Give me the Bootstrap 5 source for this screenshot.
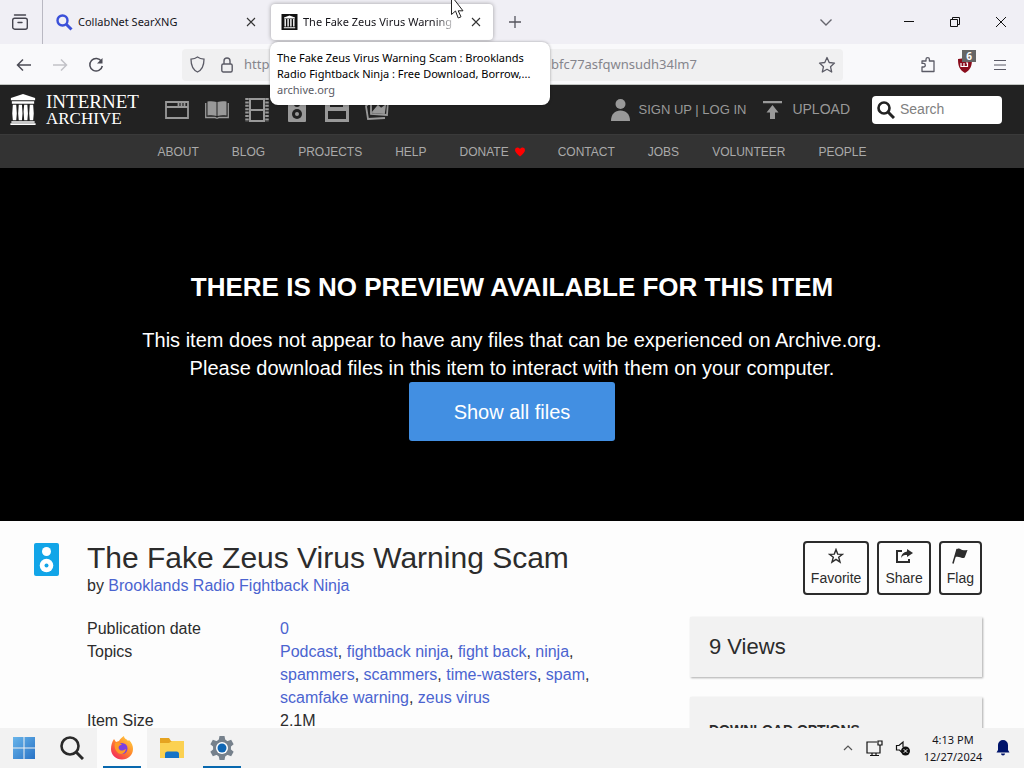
<!DOCTYPE html>
<html lang="en">
<head>
<meta charset="utf-8">
<meta name="viewport" content="width=device-width, initial-scale=1">
<title>The Fake Zeus Virus Warning Scam</title>
<link href="https://cdn.jsdelivr.net/npm/bootstrap@5.3.0/dist/css/bootstrap.min.css" rel="stylesheet">
<style>
  body { font-family: "Liberation Sans", Arial, sans-serif; color: #2c2c2c; background: #fdfdfd; }
  svg { display: block; flex: none; }
  button { background: none; border: 0; padding: 0; color: inherit; }
  a { text-decoration: none; color: #4b64d0; }

  /* browser chrome */
  .chrome { font-family: "Noto Sans", "Open Sans", sans-serif; font-size: 12px; color: #15141a; }
  .tabstrip { height: 44px; background: #f0eff5; }
  .tab-history { width: 43px; height: 44px; border-right: 1px solid #b9b8c2; color: #45454f; padding-right: 3px; }
  .browser-tab { width: 222px; height: 36px; padding: 0 12px 0 10px; margin-left: 3px; gap: 5px; border-radius: 4px; }
  .browser-tab.current { background: #fff; box-shadow: 0 0 4px rgba(0,0,0,.35); }
  .tab-text { font-size: 11px; white-space: nowrap; overflow: hidden; }
  .current .tab-text { -webkit-mask-image: linear-gradient(90deg, #000 85%, transparent); mask-image: linear-gradient(90deg, #000 85%, transparent); }
  .toolbar { height: 41px; background: #f9f9fb; border-bottom: 1px solid #c3c6c3; color: #5b5b66; padding: 1px 18px 0 16px; }
  .nav-buttons { gap: 20px; }
  .tool-buttons { gap: 21px; }
  .address { height: 32px; background: #f0f0f1; border-radius: 4px; margin: 0 77px 0 78px; padding: 0 7px 0 8px; }
  .address input { border: 0; background: none; outline: 0; padding: 0; min-width: 0; color: #85858c; font-size: 13px; }
  .address .url-start { width: 300px; margin-left: 11px; }
  .address .url-end { margin-left: 7px; }
  .tab-tip { position: absolute; left: 270px; top: 42px; width: 280px; height: 63px; padding: 8px 7px; background: #fff; border-radius: 8px; box-shadow: 0 0 3px rgba(0,0,0,.35); font-size: 11px; line-height: 16px; z-index: 5; color: #000; white-space: nowrap; }
  .tab-tip .host { color: #5b5b66; }
  .pointer { position: absolute; left: 450px; top: 0; z-index: 6; }
  .count { position: absolute; left: 5px; top: -7px; width: 14px; height: 12px; line-height: 12px; font-size: 10px; font-weight: 700; color: #fff; background: #666; text-align: center; }
  .all-tabs { margin-right: 72px; }
  .window-buttons { gap: 36px; margin-right: 18px; }

  /* site header */
  .masthead { height: 49px; background: #222; color: #999; padding: 0 22px 0 9px; font-size: 14px; }
  .masthead a { color: #999; }
  .home-link { gap: 9px; }
  .media-links { gap: 16px; }
  .wordmark { font-family: "Liberation Serif", serif; color: #fff; line-height: 17px; font-size: 17px; width: 119px; }
  .wordmark .upper { font-size: 19px; }
  .account { font-size: 13px; gap: 8px; }
  .upload { margin-left: 17px; gap: 10px; }
  .site-search { width: 130px; height: 28px; background: #fff; border-radius: 4px; padding: 0 5px; margin-left: 22px; gap: 5px; color: #222; }
  .site-search input { border: 0; outline: 0; min-width: 0; padding: 0; font-size: 14px; }
  .site-search input::placeholder { color: #808080; opacity: 1; }
  .subnav { height: 34px; background: #333; font-size: 12px; gap: 33px; border-top: 1px solid #3a3a3a; }
  .subnav a { color: #aaa; }
  .donate { gap: 6px; }

  .stage { background: #000; color: #fff; min-height: 353px; padding-top: 102px; font-size: 20px; line-height: 28px; }
  .stage h2 { font-size: 26px; font-weight: 700; line-height: 34px; margin-bottom: 22px; }
  .show-files { width: 206px; height: 59px; background: #428fe2; border-radius: 3px; color: #fff; }

  .item { padding: 20px 42px 0 34px; gap: 28px; }
  .item-icon { margin-top: 2px; }
  .item h1 { font-size: 30px; line-height: 34px; font-weight: 400; margin: 0; }
  .item-by { font-size: 16px; line-height: 22px; }
  .meta { margin: 20px 0 0; font-size: 16px; line-height: 23px; grid-template-columns: 193px minmax(0, 320px); }
  .meta dt { font-weight: 400; }
  .meta dd { margin: 0; }
  .side { width: 292px; }
  .acts { gap: 8px; }
  .act { height: 54px; border: 2px solid #2c2c2c; border-radius: 4px; font-size: 14px; line-height: 20px; padding: 0 6px; }
  .act svg { margin: 0 auto 4px; }
  .panel { background: #f2f2f2; box-shadow: 1px 1px 2px #aaa; height: 60px; margin-top: 22px; padding: 0 20px 2px 19px; font-size: 22px; }
  .panel.options { height: 160px; margin-top: 20px; padding-top: 24px; font-size: 14px; font-weight: 700; line-height: 18px; }

  /* desktop bar */
  .taskbar { height: 40px; background: #f2f2f2; padding-right: 13px; z-index: 3; }
  .task { width: 50px; height: 40px; }
  .task.start { width: 47px; }
  .task.shown { background: #fcfcfc; }
  .task.live { background-image: linear-gradient(#0868ae, #0868ae); background-size: 38px 2px; background-repeat: no-repeat; background-position: bottom center; }
  .tray { gap: 12px; }
  .clock { font-size: 11px; line-height: 17px; width: 60px; }
</style>
</head>
<body class="vh-100 d-flex flex-column overflow-hidden position-relative">

<header class="chrome flex-shrink-0">
  <div class="tabstrip d-flex align-items-center">
    <button class="tab-history d-flex align-items-center justify-content-center" aria-label="Tab history">
      <svg width="18" height="18" viewBox="0 0 18 18" fill="none" stroke="currentColor" stroke-width="1.4"><rect x="1.700" y="5.200" width="14.600" height="11" rx="2"/><path d="M3.500 2h11M7 9.500h4" stroke-linecap="round"/></svg>
    </button>
    <div class="browser-tab d-flex align-items-center">
      <svg width="17" height="17" viewBox="0 0 17 17" fill="none"><circle cx="6.500" cy="6.500" r="5" stroke="#3b50d9" stroke-width="2.400"/><path d="M10.500 10.500l5 5" stroke="#3b50d9" stroke-width="3"/></svg>
      <span class="tab-text flex-fill">CollabNet SearXNG</span>
      <button aria-label="Close tab"><svg width="10" height="10" viewBox="0 0 10 10" stroke="#333" stroke-width="1.100"><path d="M1 1l8 8M9 1L1 9"/></svg></button>
    </div>
    <div class="browser-tab current d-flex align-items-center">
      <svg width="17" height="16" viewBox="0 0 16 16"><path fill="#111" d="M0 0h16v16H0z"/><path fill="#fff" d="M8 1.500l5.500 2v1h-11v-1zM3 5h1.400v7.500H3zM5.900 5h1.400v7.500H5.900zM8.700 5h1.400v7.500H8.700zM11.600 5H13v7.500h-1.400zM2.300 13.200h11.400v1H2.300z"/></svg>
      <span class="tab-text flex-fill">The Fake Zeus Virus Warning</span>
      <button class="ms-2" aria-label="Close tab"><svg width="10" height="10" viewBox="0 0 10 10" stroke="#333" stroke-width="1.100"><path d="M1 1l8 8M9 1L1 9"/></svg></button>
    </div>
    <button class="ms-3" aria-label="New tab"><svg width="12" height="12" viewBox="0 0 12 12" stroke="#55555e" stroke-width="1.300"><path d="M6 0v12M0 6h12"/></svg></button>
    <div class="ms-auto d-flex align-items-center">
      <button class="all-tabs" aria-label="List all tabs"><svg width="12" height="12" viewBox="0 0 12 12" fill="none" stroke="#66666e" stroke-width="1.400"><path d="M.5 3.500l5.500 5.500 5.500-5.500"/></svg></button>
      <div class="window-buttons d-flex align-items-center">
        <button aria-label="Minimize"><svg width="10" height="10" viewBox="0 0 10 10"><path d="M0 4.500h10" stroke="#111"/></svg></button>
        <button aria-label="Restore"><svg width="10" height="10" viewBox="0 0 10 10" fill="none" stroke="#111"><path d="M.5 2.500h7v7h-7zM2.500 2.500v-2h7v7h-2"/></svg></button>
        <button aria-label="Close"><svg width="10" height="10" viewBox="0 0 10 10" stroke="#111"><path d="M0 0l10 10M10 0L0 10"/></svg></button>
      </div>
    </div>
  </div>

  <div class="toolbar d-flex align-items-center">
    <div class="nav-buttons d-flex align-items-center">
      <button aria-label="Back"><svg width="16" height="16" viewBox="0 0 16 16" fill="none" stroke="#4b4b55" stroke-width="1.500"><path d="M15 8H1.500M7 2.500L1.500 8 7 13.500"/></svg></button>
      <button aria-label="Forward"><svg width="16" height="16" viewBox="0 0 16 16" fill="none" stroke="#c2c2c7" stroke-width="1.500"><path d="M1 8h13.500M9 2.500L14.500 8 9 13.500"/></svg></button>
      <button aria-label="Reload"><svg width="16" height="16" viewBox="0 0 16 16" fill="none" stroke="#4b4b55" stroke-width="1.500"><path d="M13.500 4.500A6.300 6.300 0 1 0 14.300 9"/><path d="M14.500 1v5.500H9z" fill="#4b4b55" stroke="none"/></svg></button>
    </div>
    <div class="address flex-fill d-flex align-items-center">
      <svg width="15" height="17" viewBox="0 0 15 17" fill="none" stroke="currentColor" stroke-width="1.300"><path d="M7.500 1C5.500 2.500 3.500 3 1 3.200 1 9.500 2.800 13.700 7.500 16 12.200 13.700 14 9.500 14 3.200 11.500 3 9.500 2.500 7.500 1z"/></svg>
      <svg class="ms-3 me-0" width="12" height="16" viewBox="0 0 12 16" fill="none" stroke="currentColor" stroke-width="1.400"><rect x=".8" y="7" width="10.400" height="8" rx="1.500"/><path d="M3 7V4a3 3 0 0 1 6 0v3"/></svg>
      <input class="url-start" value="http" aria-label="Address">
      <input class="url-end flex-fill" value="bfc77asfqwnsudh34lm7" aria-label="End of address">
      <button aria-label="Bookmark"><svg width="18" height="18" viewBox="0 0 18 18" fill="none" stroke="currentColor" stroke-width="1.300" stroke-linejoin="round"><path d="M9 1.500l2.200 5 5.300.6-4 3.600 1.200 5.300L9 13.300 4.300 16l1.200-5.300-4-3.600 5.300-.6z"/></svg></button>
    </div>
    <div class="tool-buttons d-flex align-items-center">
      <button aria-label="Extensions"><svg width="16" height="17" viewBox="0 0 16 17" fill="none" stroke="currentColor" stroke-width="1.300" stroke-linejoin="round"><path d="M2 15.500V11h1.500a1.800 1.800 0 0 0 0-3.600H2V5h4V3.300a1.700 1.700 0 0 1 3.400 0V5H14v10.500z"/></svg></button>
      <button class="position-relative" aria-label="uBlock Origin"><svg width="16" height="16" viewBox="0 0 16 16"><path fill="#8a0d1c" d="M8 0c2 1.300 4 2 7 2 0 7-1.500 11-7 14C2.500 13 1 9 1 2c3 0 5-.7 7-2z"/><path d="M4 6v3.500h3V6M7 9.500h3.500V6H9" fill="none" stroke="#fff" stroke-width="1.200"/></svg><span class="count">6</span></button>
      <button aria-label="Menu"><svg width="12" height="12" viewBox="0 0 12 12" stroke="currentColor" stroke-width="1.200"><path d="M0 1.500h12M0 6h12M0 10.500h12"/></svg></button>
    </div>
  </div>
  <div class="tab-tip" role="tooltip">
    <div>The Fake Zeus Virus Warning Scam : Brooklands</div>
    <div>Radio Fightback Ninja : Free Download, Borrow,...</div>
    <div class="host">archive.org</div>
  </div>
  <svg class="pointer" width="14" height="20" viewBox="0 0 14 20"><path d="M1.500-4v18.500l4-3.500 2.700 7 2.800-1.200-2.800-6h4.800z" fill="#fff" stroke="#222"/></svg>
</header>

<main class="flex-fill overflow-hidden">
  <nav class="masthead d-flex align-items-center">
    <a href="#" class="home-link d-flex align-items-center">
      <svg width="28" height="31" viewBox="0 0 28 32" fill="#fff"><path d="M14 0l12.500 4v2.500h-25V4zM2.500 7.500h23V10h-23zM3.500 11h3.500l.6 9L7 27H3.500l-.6-7zM9.600 11h3.300l.6 9-.6 7H9.600L9 20zM15.200 11h3.300l.6 9-.6 7h-3.300l-.6-9zM21 11h3.500l.6 9-.6 7H21l-.6-7zM2 28h24v1.700H2zM1 30.200h26V32H1z"/></svg>
      <span class="wordmark"><span class="d-block upper">INTERNET</span><span class="d-block">ARCHIVE</span></span>
    </a>
    <div class="media-links d-flex align-items-center">
      <a href="#" aria-label="Web"><svg width="24" height="18" viewBox="0 0 24 18" fill="none" stroke="#999" stroke-width="1.800"><path d="M1 1h22v16H1zM1 6h22M13.500 1v4M16.500 1v4M19.500 1v4"/></svg></a>
      <a href="#" aria-label="Texts"><svg width="24" height="18" viewBox="0 0 24 18"><path fill="#999" d="M2.500.5c3-.5 6-.5 9 .5v14c-3-1-6-1-9-.5zM21.500.5c-3-.5-6-.5-9 .5v14c3-1 6-1 9-.5z"/><path d="M.7 2v14.500h9.500l1 .7h1.600l1-.7h9.500V2" fill="none" stroke="#999" stroke-width="1.300"/></svg></a>
      <a href="#" aria-label="Video"><svg width="24" height="24" viewBox="0 0 24 24" fill="none" stroke="#999" stroke-width="2"><path d="M5 1h14v22H5zM5 12h14"/><path d="M2 0v24M22 0v24" stroke-width="3.500" stroke-dasharray="2 1.400"/></svg></a>
      <a href="#" aria-label="Audio"><svg width="24" height="24" viewBox="0 0 24 24"><rect x="3" width="18" height="24" rx="1" fill="#999"/><circle cx="12" cy="6" r="3" fill="#222"/><circle cx="12" cy="16" r="5" fill="#222"/><circle cx="12" cy="16" r="2" fill="#999"/></svg></a>
      <a href="#" aria-label="Software"><svg width="24" height="24" viewBox="0 0 24 24"><path fill="#999" d="M0 0h21l3 3v21H0z"/><path fill="#222" d="M5 0h13v9H5zM3 13h18v8H3z"/><path fill="#999" d="M13 1h3v6h-3z"/></svg></a>
      <a href="#" aria-label="Images"><svg width="24" height="22" viewBox="0 0 24 22" fill="none" stroke="#999" stroke-width="1.800"><path d="M6 1l17 1-1 14-16-1zM3 5L1 7l2 13 17-1"/><path fill="#999" d="M8 13l5-6 3 3 4-3-1 7z"/></svg></a>
    </div>
    <div class="ms-auto d-flex align-items-center">
      <a href="#" class="account d-flex align-items-center"><svg width="21" height="24" viewBox="0 0 21 24" fill="#999"><circle cx="10.500" cy="6" r="5"/><path d="M1 23C1 16 5 12.500 10.500 12.500S20 16 20 23z"/></svg><span>SIGN UP | LOG IN</span></a>
      <a href="#" class="upload d-flex align-items-center"><svg width="19" height="20" viewBox="0 0 19 20" fill="#999"><path d="M0 1h19v2.200H0zM9.500 5l6 7.500H12V19H7v-6.500H3.500z"/></svg><span>UPLOAD</span></a>
      <label class="site-search d-flex align-items-center"><svg width="18" height="18" viewBox="0 0 18 18" fill="none" stroke="#222" stroke-width="2.600"><circle cx="7" cy="7" r="5.500"/><path d="M11 11l6 6" stroke-width="3"/></svg><input class="flex-fill" type="text" placeholder="Search" aria-label="Search"></label>
    </div>
  </nav>
  <nav class="subnav d-flex align-items-center justify-content-center">
    <a href="#">ABOUT</a><a href="#">BLOG</a><a href="#">PROJECTS</a><a href="#">HELP</a>
    <a href="#" class="donate d-flex align-items-center">DONATE <svg width="10" height="10" viewBox="0 0 10 10"><path fill="#f00" d="M5 9.500C2 7 0 5 0 3a2.600 2.600 0 0 1 5-1 2.600 2.600 0 0 1 5 1c0 2-2 4-5 6.500z"/></svg></a>
    <a href="#">CONTACT</a><a href="#">JOBS</a><a href="#">VOLUNTEER</a><a href="#">PEOPLE</a>
  </nav>

  <section class="stage text-center">
    <h2>THERE IS NO PREVIEW AVAILABLE FOR THIS ITEM</h2>
    <div>This item does not appear to have any files that can be experienced on Archive.org.</div>
    <div>Please download files in this item to interact with them on your computer.</div>
    <button class="show-files">Show all files</button>
  </section>

  <section class="item d-flex">
    <svg class="item-icon" width="25" height="33" viewBox="0 0 25 33"><rect width="25" height="33" rx="2" fill="#12a5e8"/><circle cx="12.500" cy="8.500" r="4.500" fill="#fff"/><circle cx="12.500" cy="22.500" r="6.800" fill="#fff"/><circle cx="12.500" cy="22.500" r="2" fill="#12a5e8"/></svg>
    <div class="flex-fill">
      <h1>The Fake Zeus Virus Warning Scam</h1>
      <div class="item-by">by <a href="#">Brooklands Radio Fightback Ninja</a></div>
      <dl class="meta d-grid">
        <dt>Publication date</dt><dd><a href="#">0</a></dd>
        <dt>Topics</dt><dd><a href="#">Podcast</a>, <a href="#">fightback ninja</a>, <a href="#">fight back</a>, <a href="#">ninja</a>, <a href="#">spammers</a>, <a href="#">scammers</a>, <a href="#">time-wasters</a>, <a href="#">spam</a>, <a href="#">scamfake warning</a>, <a href="#">zeus virus</a></dd>
        <dt>Item Size</dt><dd>2.1M</dd>
      </dl>
    </div>
    <aside class="side flex-shrink-0">
      <div class="acts d-flex justify-content-end">
        <button class="act"><svg width="16" height="16" viewBox="0 0 16 16" fill="none" stroke="#2c2c2c" stroke-width="1.400"><path d="M8 1.500l1.700 4.600 4.800.2-3.800 3 1.300 4.700L8 11.300 4 14l1.300-4.700-3.800-3 4.800-.2z"/></svg><span class="d-block">Favorite</span></button>
        <button class="act"><svg width="18" height="16" viewBox="0 0 18 16"><path d="M7 3H2v11h12v-3" fill="none" stroke="#2c2c2c" stroke-width="2"/><path fill="#2c2c2c" d="M12 1l6 4-6 4V7c-3 0-4.500.5-6 3C6.500 6 8.500 4 12 3.500z"/></svg><span class="d-block">Share</span></button>
        <button class="act"><svg width="18" height="16" viewBox="0 0 18 17"><path d="M6 1L1.500 16.500" stroke="#2c2c2c" stroke-width="1.600"/><path fill="#2c2c2c" d="M6 1c3-1.500 4 1.500 7 1.500 1.500 0 2.500-.3 4-.5l-3 8c-4 2-5.500-2-10.500 0z"/></svg><span class="d-block">Flag</span></button>
      </div>
      <div class="panel d-flex align-items-center">9 Views</div>
      <div class="panel options">DOWNLOAD OPTIONS</div>
    </aside>
  </section>
</main>

<footer class="taskbar chrome d-flex align-items-center flex-shrink-0">
  <button class="task start d-flex align-items-center justify-content-center" aria-label="Start"><svg width="22" height="22" viewBox="0 0 22 22"><defs><linearGradient id="win" x2="1" y2="1"><stop stop-color="#69b5ea"/><stop offset="1" stop-color="#2873c6"/></linearGradient></defs><path fill="url(#win)" d="M0 0h10.500v10.500H0zM11.500 0H22v10.500H11.500zM0 11.500h10.500V22H0zM11.500 11.500H22V22H11.500z"/></svg></button>
  <button class="task d-flex align-items-center justify-content-center" aria-label="Search"><svg width="24" height="24" viewBox="0 0 24 24" fill="none" stroke="#2a2a2a" stroke-width="2.600"><circle cx="10" cy="10" r="8.500"/><path d="M16 16l7 7" stroke-width="3"/></svg></button>
  <button class="task shown live d-flex align-items-center justify-content-center" aria-label="Firefox"><svg width="24" height="24" viewBox="0 0 24 24"><defs><linearGradient id="fox" x1="1" y1="0" x2=".2" y2="1"><stop stop-color="#ffe14a"/><stop offset=".5" stop-color="#ff8a2b"/><stop offset="1" stop-color="#f3255c"/></linearGradient></defs><path fill="url(#fox)" d="M4 3l2 3 3-1c1-2 3-4 5-5 0 3 3 3 4 5l1-1c3 3 4 6 4 9 0 6-5 10.500-11 10.500S1 19 1 13c0-4 1-7 3-10z"/><circle cx="12" cy="12.500" r="5.500" fill="#7a3fe0"/><path fill="#ff9a26" d="M5 7c3-1 5 0 7 2-3 0-4 2-3 4 2 3 5 1 7 0-1 5-5 6-8 4-3-3-4-6-3-10z"/></svg></button>
  <button class="task d-flex align-items-center justify-content-center" aria-label="File Explorer"><svg width="26" height="24" viewBox="0 0 26 24"><path fill="#e5a320" d="M1 2h9l2 3h13v5H1z"/><path fill="#fbd152" d="M1 7h9l3-2h12v17H1z"/><path fill="#1673c7" d="M6 22v-4q0-2.500 2.500-2.500h9Q20 15.500 20 18v4z"/></svg></button>
  <button class="task live d-flex align-items-center justify-content-center" aria-label="Settings"><svg width="24" height="24" viewBox="0 0 24 24"><g fill="#76818c"><circle cx="12" cy="12" r="9"/><path id="teeth" d="M9.500 0h5l1 5h-7zM8.500 19h7l-1 5h-5z"/><use href="#teeth" transform="rotate(60 12 12)"/><use href="#teeth" transform="rotate(120 12 12)"/></g><circle cx="12" cy="12" r="6" fill="#fff"/><circle cx="12" cy="12" r="4.500" fill="#0f66b4"/></svg></button>
  <div class="tray ms-auto d-flex align-items-center">
    <button aria-label="Hidden icons"><svg width="12" height="8" viewBox="0 0 10 8" fill="none" stroke="#555" stroke-width="1.200"><path d="M1 6l4-4 4 4"/></svg></button>
    <svg width="17" height="17" viewBox="0 0 17 17" fill="none" stroke="#111" stroke-width="1.200"><path d="M11 2H1v11h13V8M4 15.500h9M6 13v2.500M10 13v2.500M12 1h4v4h-4zM14 5v4"/></svg>
    <svg width="16" height="16" viewBox="0 0 16 16"><path d="M7 12.500L4.500 10H1.500V5.500H4L8 2v5" fill="none" stroke="#111" stroke-width="1.200"/><circle cx="10.500" cy="11" r="4.500" fill="#111"/><path d="M8.700 9.200l3.600 3.600M12.300 9.200l-3.600 3.600" stroke="#fff"/></svg>
    <div class="clock text-center">4:13 PM<br>12/27/2024</div>
    <button aria-label="Notifications"><svg width="16" height="16" viewBox="0 0 16 16" fill="#00146b"><path d="M8 0a5 5 0 0 1 5 5v5l1.500 2.500h-13L3 10V5a5 5 0 0 1 5-5zM6 13.500h4a2 2 0 0 1-4 0z"/></svg></button>
  </div>
</footer>
<script src="https://cdn.jsdelivr.net/npm/bootstrap@5.3.0/dist/js/bootstrap.bundle.min.js"></script>
</body>
</html>
